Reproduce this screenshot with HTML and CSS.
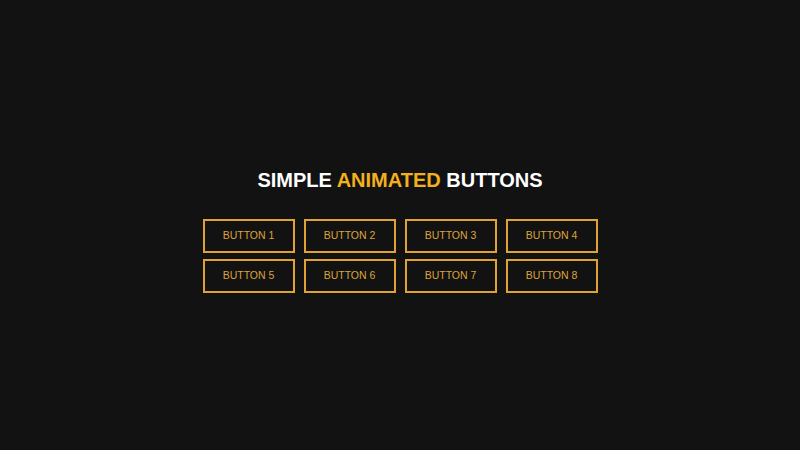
FILE: index.html
```html
<!DOCTYPE html>
<html lang="en">
<head>
    <meta charset="UTF-8">
    <meta name="viewport" content="width=device-width, initial-scale=1.0">
    <title>Simple Animated Buttons</title>
    <link rel="stylesheet" href="styles.css">
</head>
<body>
    <main class="wrapper">
        <h1 class="title">Simple <span class="accent">Animated</span> Buttons</h1>

        <div class="button-grid">
            <button class="btn">Button 1</button>
            <button class="btn">Button 2</button>
            <button class="btn">Button 3</button>
            <button class="btn">Button 4</button>
            <button class="btn">Button 5</button>
            <button class="btn">Button 6</button>
            <button class="btn">Button 7</button>
            <button class="btn">Button 8</button>
        </div>
    </main>
</body>
</html>
```

FILE: styles.css
```css
:root {
    --bg-color: #121212;
    --accent-color: #f2b01e;
    --button-color: #e0a232;
    --text-color: #ffffff;
}

* {
    margin: 0;
    padding: 0;
    box-sizing: border-box;
    font-family: 'Liberation Sans', Arial, sans-serif;
}

body {
    background-color: var(--bg-color);
    color: var(--text-color);
    min-height: 100vh;
}

.wrapper {
    min-height: 100vh;
    display: flex;
    flex-direction: column;
    align-items: center;
    justify-content: center;
    padding-top: 11px;
}

.title {
    font-size: 20px;
    font-weight: 700;
    text-transform: uppercase;
    margin-bottom: 27px;
}

.accent {
    color: var(--accent-color);
}

.button-grid {
    display: grid;
    grid-template-columns: repeat(4, 92px);
    column-gap: 9px;
    row-gap: 6px;
}

.btn {
    height: 34px;
    padding-bottom: 2px;
    background: transparent;
    border: 2px solid var(--button-color);
    color: #dea43a;
    font-size: 10.5px;
    text-transform: uppercase;
    cursor: pointer;
    transition: all 0.3s;
}

.btn:hover {
    background-color: var(--button-color);
    color: var(--bg-color);
}
```
